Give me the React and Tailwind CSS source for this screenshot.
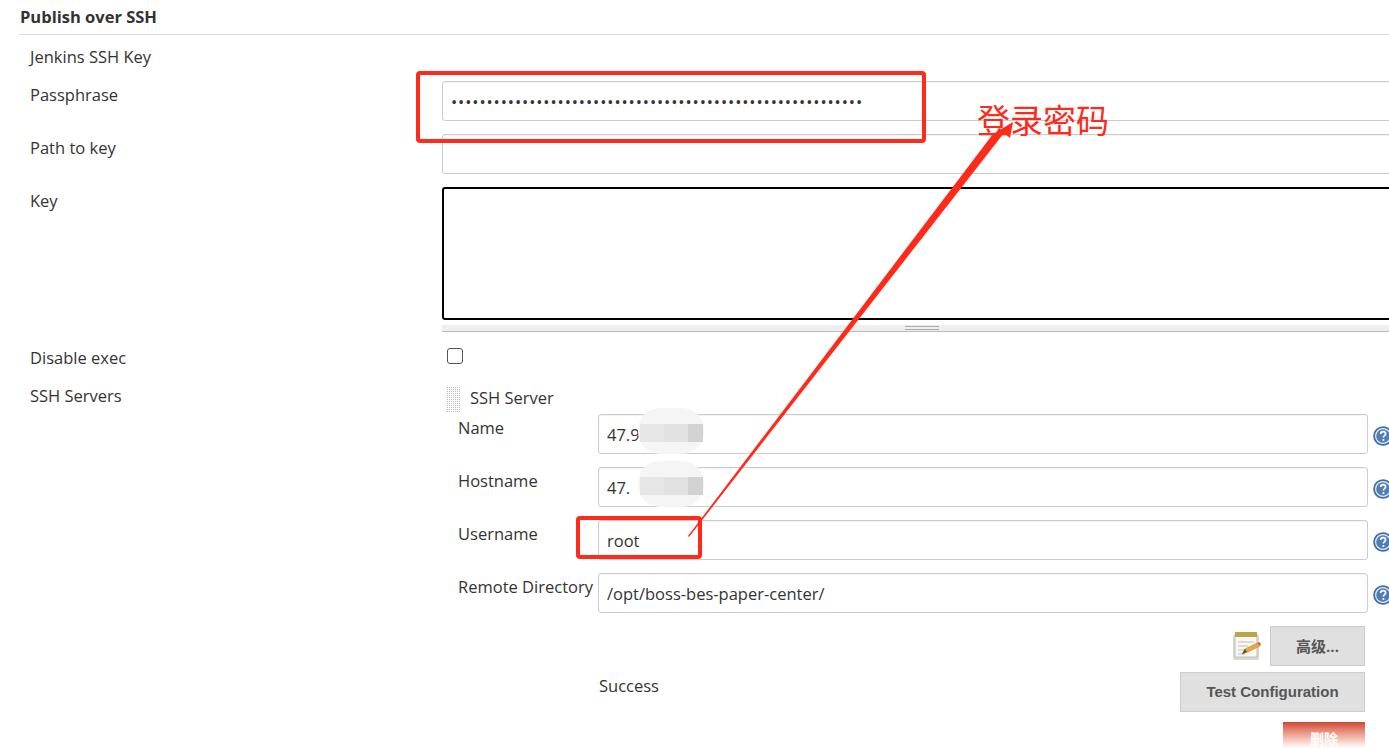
const passphrase = "x".repeat(58);

function HelpIcon() {
  return (
    <svg viewBox="0 0 20 20" className="w-5 h-5 ml-[5px] mt-3 shrink-0">
      <circle cx="10" cy="10" r="9.8" fill="#3f6da8" />
      <circle cx="10" cy="10" r="8" fill="#e6edf6" />
      <circle cx="10" cy="10" r="6.8" fill="#4f7db5" />
      <path
        d="M7.6 8c.1-1.5 1.1-2.3 2.5-2.3 1.500 0 2.500.9 2.500 2.100 0 1.100-.6 1.600-1.300 2.100-.6.4-.9.8-.9 1.500"
        fill="none"
        stroke="#fff"
        strokeWidth="1.700"
      />
      <circle cx="10.400" cy="14" r="1.100" fill="#fff" />
    </svg>
  );
}

function NotepadIcon() {
  return (
    <svg viewBox="0 0 30 30" className="w-[30px] h-[30px]">
      <rect x="1" y="4" width="26" height="25" rx="2" fill="#d8d8d0" />
      <rect x="3" y="3" width="22" height="23" fill="#f8f8f4" stroke="#c4c4bc" />
      <rect x="3" y="1" width="22" height="5" fill="#bba64c" />
      <path d="M6 11h16M6 15h10M6 19h7M6 23h7" stroke="#d2d2cc" strokeWidth="1.500" />
      <path d="M10 23l3-5 12-6 3 3-12 6z" fill="#e9a93a" stroke="#b9802a" strokeWidth=".5" />
      <path d="M25 12l3 3 1-2-2-2z" fill="#e0574a" />
      <path d="M10 23l3-5 2 3z" fill="#5b4a32" />
    </svg>
  );
}

function GripIcon() {
  return (
    <svg viewBox="0 0 14 25" className="w-[14px] h-[25px] shrink-0">
      <defs>
        <pattern id="grip" width="2" height="2" patternUnits="userSpaceOnUse">
          <rect width="1" height="1" fill="#bdbdbd" />
        </pattern>
      </defs>
      <rect width="14" height="25" fill="url(#grip)" />
    </svg>
  );
}

function Field({ value, type = "text", className = "" }) {
  return (
    <input
      type={type}
      value={value}
      readOnly
      className={`h-10 px-2 shrink-0 border border-[#ccc] rounded-[3px] bg-white text-[#333] outline-none shadow-[inset_0_1px_1px_rgba(0,0,0,0.05)] ${className}`}
    />
  );
}

// blurred-out ip address
function Smudge() {
  return (
    <>
      <div className="absolute left-[40px] -top-[6px] w-[66px] h-[46px] rounded-[22px] bg-[#f5f5f5]" />
      <div className="absolute left-[42px] top-[10px] w-[63px] h-[18px] flex">
        <div className="flex-1 bg-[#e6e6e6]" />
        <div className="flex-1 bg-[#e2e2e2]" />
        <div className="w-[15px] bg-[#d2d2d2]" />
      </div>
    </>
  );
}

function ServerRow({ label, value, smudge }) {
  return (
    <div className="flex h-[53px]">
      <div className="w-[156px] shrink-0 pl-4 pt-0.5 leading-6 whitespace-nowrap">{label}</div>
      <div className="relative shrink-0">
        <Field value={value} className="w-[770px] block" />
        {smudge && <Smudge />}
      </div>
      <HelpIcon />
    </div>
  );
}

export default function App() {
  return (
    <div
      className="relative w-[1389px] h-[748px] overflow-hidden bg-white text-[#333]"
      style={{ fontFamily: '"Open Sans", "Noto Sans CJK SC", sans-serif', fontSize: "16.5px" }}
    >
      <div className="ml-[19px] h-[35px] pl-px flex items-center border-b border-[#ddd] font-bold">
        Publish over SSH
      </div>

      <div className="ml-[30px] h-[46px] pt-2.5 leading-6">Jenkins SSH Key</div>

      <div className="flex h-[53px] pl-[30px]">
        <div className="w-[412px] shrink-0 pt-0.5 leading-6">Passphrase</div>
        <Field value={passphrase} type="password" className="w-[960px] tracking-[0.9px]" />
      </div>

      <div className="flex h-[53px] pl-[30px]">
        <div className="w-[412px] shrink-0 pt-0.5 leading-6">Path to key</div>
        <Field value="" className="w-[960px]" />
      </div>

      <div className="flex h-[145px] pl-[30px]">
        <div className="w-[412px] shrink-0 pt-0.5 leading-6">Key</div>
        <div className="w-[960px] shrink-0">
          <div className="h-[133px] border-2 border-black rounded-[3px]" />
          <div className="mt-[5px] h-[7px] bg-[#eee] border-b border-[#bbb] flex justify-center">
            <div className="w-[34px] h-[4px] mt-px border-y border-[#aaa]" />
          </div>
        </div>
      </div>

      <div className="flex h-[52px] pl-[30px]">
        <div className="w-[412px] shrink-0 pt-3.5 leading-6">Disable exec</div>
        <div className="pt-4 pl-[5px]">
          <div className="w-4 h-4 border border-[#555] rounded-[3px] bg-white" />
        </div>
      </div>

      <div className="flex pl-[30px]">
        <div className="w-[412px] shrink-0 leading-6">SSH Servers</div>
        <div className="w-[923px] shrink-0">
          <div className="flex h-[30px] pl-[5px] pt-[3px] leading-6">
            <GripIcon />
            <span className="ml-[9px] -mt-px">SSH Server</span>
          </div>
          <ServerRow label="Name" value="47.9" smudge />
          <ServerRow label="Hostname" value="47." smudge />
          <ServerRow label="Username" value="root" />
          <ServerRow label="Remote Directory" value="/opt/boss-bes-paper-center/" />

          <div className="flex justify-end items-center gap-2 h-10">
            <NotepadIcon />
            <button className="w-[95px] h-10 bg-[#e0e0e0] border border-[#ccc] font-bold text-[15px] text-[#555]">
              高级...
            </button>
          </div>
          <div className="flex justify-between mt-1.5">
            <div className="pl-[157px] pt-0.5 leading-6">Success</div>
            <button
              className="w-[185px] h-10 bg-[#e0e0e0] border border-[#ccc] font-bold text-[15px] text-[#555]"
              style={{ fontFamily: '"Liberation Sans", sans-serif' }}
            >
              Test Configuration
            </button>
          </div>
          <div className="flex justify-end mt-2.5">
            <button className="w-[82px] h-[26px] flex justify-center items-end bg-gradient-to-b from-[#cf4635] to-white text-white font-bold text-sm leading-[18px]">
              删除
            </button>
          </div>
        </div>
      </div>

      {/* annotations drawn on top of the screenshot */}
      <div className="absolute left-[416px] top-[71px] w-[510px] h-[72px] border-4 border-[#ff2a1a] rounded-[4px]" />
      <div className="absolute left-[576px] top-[516px] w-[126px] h-[43px] border-4 border-[#ff2a1a] rounded-[4px]" />
      <svg className="absolute left-0 top-0 w-[1389px] h-[748px] pointer-events-none" viewBox="0 0 1389 748">
        <polygon
          points="688,536 993,134 1013,122 1010,138 1004,133 689,537"
          fill="#ff2a1a"
        />
      </svg>
      <div
        className="absolute left-[977px] top-[96px] text-[33px] leading-[46px] text-[#ff2a1a] whitespace-nowrap"
        style={{ fontFamily: '"Noto Sans CJK SC", sans-serif' }}
      >
        登录密码
      </div>
    </div>
  );
}
